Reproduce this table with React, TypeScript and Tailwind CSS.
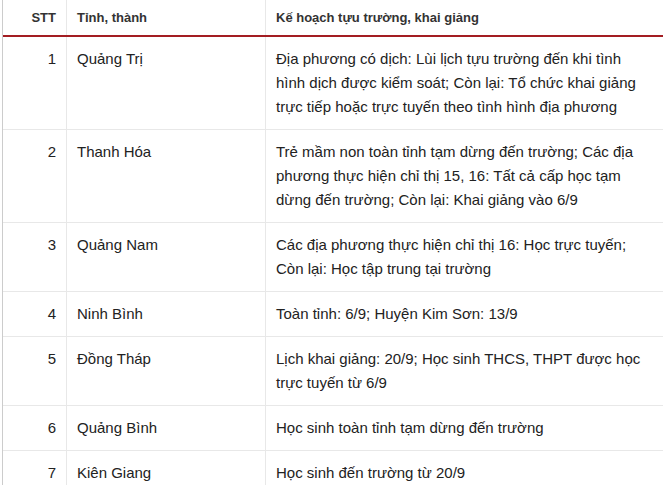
const rows = [
  {
    stt: 1,
    name: "Quảng Trị",
    plan: "Địa phương có dịch: Lùi lịch tựu trường đến khi tình hình dịch được kiểm soát; Còn lại: Tổ chức khai giảng trực tiếp hoặc trực tuyến theo tình hình địa phương",
  },
  {
    stt: 2,
    name: "Thanh Hóa",
    plan: "Trẻ mầm non toàn tỉnh tạm dừng đến trường; Các địa phương thực hiện chỉ thị 15, 16: Tất cả cấp học tạm dừng đến trường; Còn lại: Khai giảng vào 6/9",
  },
  {
    stt: 3,
    name: "Quảng Nam",
    plan: "Các địa phương thực hiện chỉ thị 16: Học trực tuyến; Còn lại: Học tập trung tại trường",
  },
  { stt: 4, name: "Ninh Bình", plan: "Toàn tỉnh: 6/9; Huyện Kim Sơn: 13/9" },
  {
    stt: 5,
    name: "Đồng Tháp",
    plan: "Lịch khai giảng: 20/9; Học sinh THCS, THPT được học trực tuyến từ 6/9",
  },
  { stt: 6, name: "Quảng Bình", plan: "Học sinh toàn tỉnh tạm dừng đến trường" },
  { stt: 7, name: "Kiên Giang", plan: "Học sinh đến trường từ 20/9" },
];

export default function App() {
  return (
    <div className="h-[485px] w-[663px] overflow-hidden bg-white pl-[2px] font-['Liberation_Sans',Arial,sans-serif]">
      <div className="border-l border-[#cccccc]">
        <div className="grid grid-cols-[64px_199px_1fr] border-b-2 border-[#a31d22] text-[13px] font-bold leading-[15px] text-[#333]">
          <div className="border-r border-[#e8e8e8] py-[10px] pr-[10px] text-right">STT</div>
          <div className="border-r border-[#e8e8e8] px-[10px] py-[10px]">Tỉnh, thành</div>
          <div className="px-[10px] py-[10px]">Kế hoạch tựu trường, khai giảng</div>
        </div>
        {rows.map((r) => (
          <div
            key={r.stt}
            className="grid grid-cols-[64px_199px_1fr] border-b border-[#e8e8e8] text-[15px] leading-[24px] text-[#222]"
          >
            <div className="border-r border-[#e8e8e8] py-[10px] pr-[10px] text-right">{r.stt}</div>
            <div className="border-r border-[#e8e8e8] px-[10px] py-[10px]">{r.name}</div>
            <div className="px-[10px] py-[10px]">{r.plan}</div>
          </div>
        ))}
      </div>
    </div>
  );
}
